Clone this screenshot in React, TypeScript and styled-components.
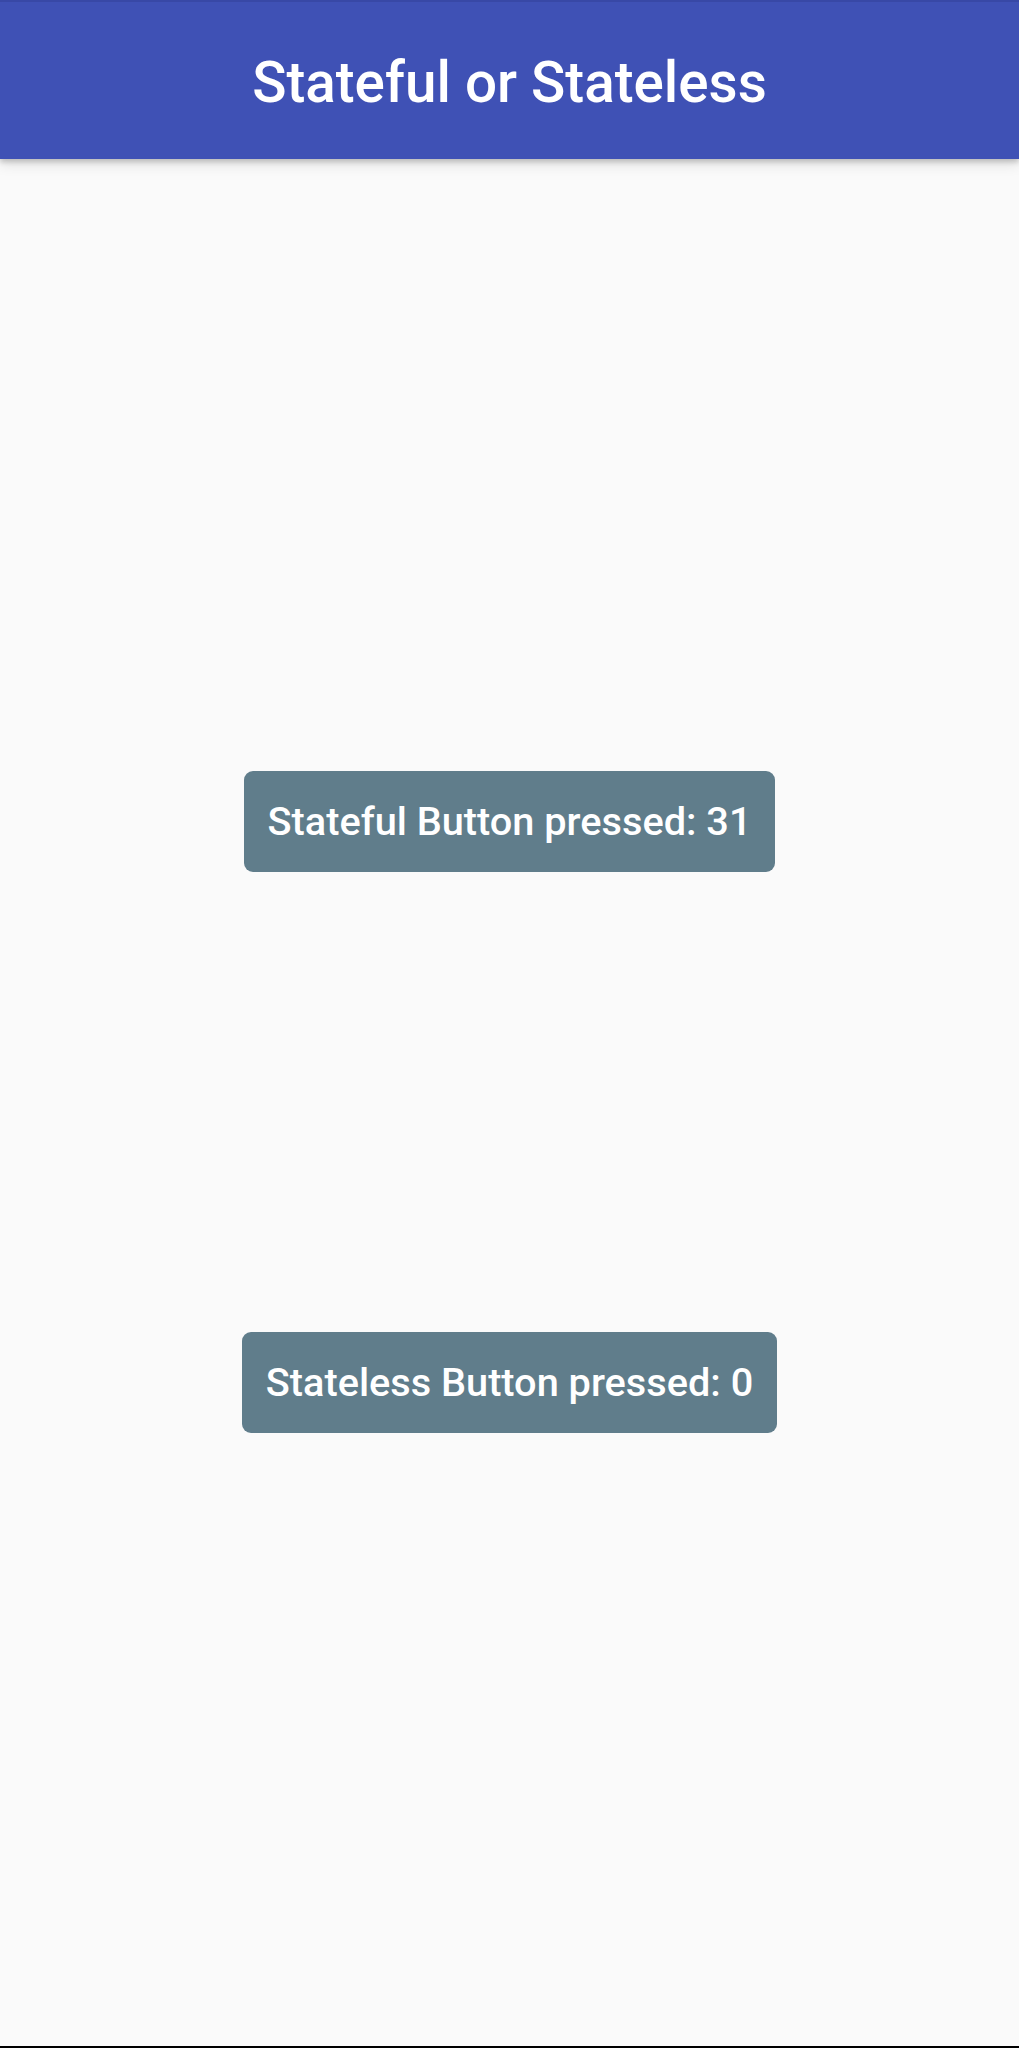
import React, { useState } from "react";
import styled, { createGlobalStyle } from "styled-components";

const GlobalStyle = createGlobalStyle`
  html, body {
    margin: 0;
    padding: 0;
    background: #fafafa;
  }
  body {
    font-family: Roboto, "Noto Sans", "Liberation Sans", sans-serif;
  }
  * { box-sizing: border-box; }
`;

const Screen = styled.div`
  width: 1019px;
  height: 2048px;
  display: flex;
  flex-direction: column;
  background: #fafafa;
  border-bottom: 2px solid #000;
  overflow: hidden;
`;

const AppBar = styled.header`
  position: relative;
  z-index: 1;
  height: 159px;
  flex: none;
  display: flex;
  align-items: center;
  justify-content: center;
  background: #3f51b5;
  border-top: 2px solid #3848a6;
  box-shadow: 0 3px 5px rgba(0, 0, 0, 0.18), 0 6px 12px rgba(0, 0, 0, 0.1);
`;

const Title = styled.h1`
  margin: 0;
  padding-top: 4px;
  color: #ffffff;
  font-family: Roboto, "Noto Sans", sans-serif;
  font-weight: 500;
  font-size: 56.6px;
  letter-spacing: 0;
`;

const Body = styled.main`
  flex: 1;
  display: flex;
  flex-direction: column;
  align-items: center;
  padding-top: 612px;
  gap: 460px;
`;

const CountButton = styled.button`
  height: 101px;
  padding: 0 23.5px;
  border: none;
  border-radius: 9px;
  background: #607d8b;
  color: #ffffff;
  font-family: Roboto, "Noto Sans", sans-serif;
  font-weight: 500;
  font-size: 39.7px;
  cursor: pointer;
`;

function StatefulButton() {
  const [count, setCount] = useState(31);
  return (
    <CountButton onClick={() => setCount((c) => c + 1)}>
      Stateful Button pressed: {count}
    </CountButton>
  );
}

function StatelessButton({ count }: { count: number }) {
  return <CountButton>Stateless Button pressed: {count}</CountButton>;
}

export default function App() {
  return (
    <>
      <GlobalStyle />
      <Screen>
        <AppBar>
          <Title>Stateful or Stateless</Title>
        </AppBar>
        <Body>
          <StatefulButton />
          <StatelessButton count={0} />
        </Body>
      </Screen>
    </>
  );
}
